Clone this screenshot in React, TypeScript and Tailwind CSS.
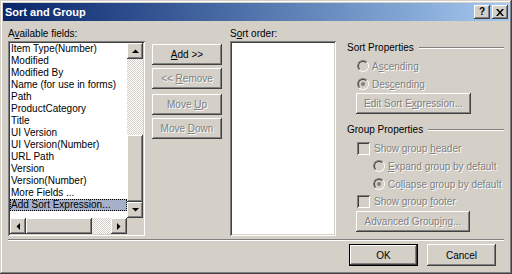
import React from 'react';

const raised =
  'shadow-[inset_-1px_-1px_#404040,inset_1px_1px_#fff,inset_-2px_-2px_#808080,inset_2px_2px_#d4d0c8]';
const sunken =
  'shadow-[inset_1px_1px_#808080,inset_-1px_-1px_#fff,inset_2px_2px_#404040,inset_-2px_-2px_#d4d0c8]';
const dimText = 'text-[#808080] [text-shadow:1px_1px_0_#fff]';
const checker =
  'bg-[image:repeating-conic-gradient(#fff_0_25%,#d4d0c8_0_50%)] bg-[length:2px_2px]';

const fields = [
  'Item Type(Number)',
  'Modified',
  'Modified By',
  'Name (for use in forms)',
  'Path',
  'ProductCategory',
  'Title',
  'UI Version',
  'UI Version(Number)',
  'URL Path',
  'Version',
  'Version(Number)',
  'More Fields ...',
  'Add Sort Expression...',
];

// label with one underlined access key
const Key: React.FC<{ text: string; at: number }> = ({ text, at }) => (
  <>
    {text.slice(0, at)}
    <span className="underline underline-offset-[1px]">{text[at]}</span>
    {text.slice(at + 1)}
  </>
);

const Button: React.FC<{
  children: React.ReactNode;
  disabled?: boolean;
  isDefault?: boolean;
  className?: string;
}> = ({ children, disabled, isDefault, className = '' }) => (
  <div
    className={`flex items-center justify-center bg-[#d4d0c8] ${raised} ${
      isDefault ? 'border border-black' : ''
    } ${disabled ? dimText : 'text-black'} ${className}`}
  >
    <span>{children}</span>
  </div>
);

const Arrow: React.FC<{ dir: 'up' | 'down' | 'left' | 'right' }> = ({ dir }) => {
  const pts = {
    up: '0,4 7,4 3.5,0.5',
    down: '0,0 7,0 3.5,3.5',
    left: '4,0 4,7 0.5,3.5',
    right: '0,0 0,7 3.5,3.5',
  }[dir];
  const vertical = dir === 'up' || dir === 'down';
  return (
    <svg width={vertical ? 7 : 4} height={vertical ? 4 : 7} viewBox={vertical ? '0 0 7 4' : '0 0 4 7'}>
      <polygon points={pts} fill="#000" />
    </svg>
  );
};

const ScrollBtn: React.FC<{ dir: 'up' | 'down' | 'left' | 'right' }> = ({ dir }) => (
  <div className={`w-[16px] h-[16px] shrink-0 flex items-center justify-center bg-[#d4d0c8] ${raised}`}>
    <Arrow dir={dir} />
  </div>
);

const Radio: React.FC<{ checked?: boolean }> = ({ checked }) => (
  <div className="w-[12px] h-[12px] shrink-0 rounded-full border border-t-[#808080] border-l-[#808080] border-r-white border-b-white">
    <div className="w-full h-full rounded-full border border-t-[#404040] border-l-[#404040] border-r-[#d4d0c8] border-b-[#d4d0c8] bg-[#d4d0c8] flex items-center justify-center">
      {checked && <div className="w-[4px] h-[4px] rounded-full bg-[#808080]" />}
    </div>
  </div>
);

const Check: React.FC = () => <div className={`w-[13px] h-[13px] shrink-0 bg-[#d4d0c8] ${sunken}`} />;

const GroupHeader: React.FC<{ title: string }> = ({ title }) => (
  <div className="h-[13px] flex items-center">
    <span className="leading-[13px]">{title}</span>
    <div className="ml-[5px] flex-1 h-0 border-t border-t-[#808080] border-b border-b-white" />
  </div>
);

export default function App() {
  return (
    <div
      className={`w-[512px] h-[274px] bg-[#d4d0c8] p-[3px] flex flex-col font-['Liberation_Sans',Arial,sans-serif] text-[10px] text-black shadow-[inset_-1px_-1px_#404040,inset_1px_1px_#d4d0c8,inset_-2px_-2px_#808080,inset_2px_2px_#fff]`}
    >
      {/* title bar */}
      <div className="h-[18px] shrink-0 flex items-center bg-linear-to-r from-[#0a246a] to-[#a6caf0] pl-[2px] pr-[1px]">
        <span className="text-white font-bold text-[11px] leading-none">Sort and Group</span>
        <div className="ml-auto flex gap-[2px]">
          <div className={`w-[16px] h-[14px] flex items-center justify-center bg-[#d4d0c8] ${raised}`}>
            <span className="font-bold text-[10px] leading-none">?</span>
          </div>
          <div className={`w-[16px] h-[14px] flex items-center justify-center bg-[#d4d0c8] ${raised}`}>
            <svg width="8" height="7" viewBox="0 0 8 7">
              <path d="M0 0h2l2 2.5L6 0h2L5 3.5 8 7H6L4 4.5 2 7H0l3-3.5z" fill="#000" />
            </svg>
          </div>
        </div>
      </div>

      {/* body */}
      <div className="flex-1 flex flex-col px-[5px]">
        <div className="mt-[6px] flex">
          {/* available fields */}
          <div className="w-[137px] flex flex-col">
            <div className="h-[14px] leading-[13px]">
              <Key text="Available fields:" at={1} />
            </div>
            <div className={`h-[195px] bg-white p-[2px] flex flex-col ${sunken}`}>
              <div className="flex flex-1 min-h-0">
                <div className="flex-1 flex flex-col overflow-hidden">
                  {fields.map((f, i) => (
                    <div
                      key={f}
                      className={`h-[12px] shrink-0 leading-[12px] pl-[1px] whitespace-nowrap ${
                        i === fields.length - 1
                          ? 'bg-[#a5b0ca] outline outline-1 outline-dotted outline-black -outline-offset-1'
                          : ''
                      }`}
                    >
                      {f}
                    </div>
                  ))}
                </div>
                <div className="w-[16px] flex flex-col">
                  <ScrollBtn dir="up" />
                  <div className={`flex-1 ${checker}`} />
                  <div className={`h-[67px] bg-[#d4d0c8] ${raised}`} />
                  <ScrollBtn dir="down" />
                </div>
              </div>
              <div className="h-[16px] flex">
                <ScrollBtn dir="left" />
                <div className={`w-[66px] bg-[#d4d0c8] ${raised}`} />
                <div className={`flex-1 ${checker}`} />
                <ScrollBtn dir="right" />
                <div className="w-[16px] bg-[#d4d0c8]" />
              </div>
            </div>
          </div>

          {/* move buttons */}
          <div className="ml-[7px] w-[70px] pt-[17px] flex flex-col">
            <Button className="h-[21px]">
              <Key text="Add >>" at={0} />
            </Button>
            <Button disabled className="h-[21px] mt-[3px]">
              <Key text="<< Remove" at={3} />
            </Button>
            <Button disabled className="h-[21px] mt-[5px]">
              <Key text="Move Up" at={5} />
            </Button>
            <Button disabled className="h-[21px] mt-[3px]">
              <Key text="Move Down" at={5} />
            </Button>
          </div>

          {/* sort order */}
          <div className="ml-[8px] w-[106px] flex flex-col">
            <div className="h-[14px] leading-[13px]">
              <Key text="Sort order:" at={1} />
            </div>
            <div className={`h-[195px] bg-white ${sunken}`} />
          </div>

          {/* properties */}
          <div className="ml-[11px] flex-1 pt-[14px] flex flex-col">
            <GroupHeader title="Sort Properties" />
            <div className={`mt-[3px] h-[18px] ml-[10px] flex items-center gap-[3px] ${dimText}`}>
              <Radio />
              <span>
                <Key text="Ascending" at={1} />
              </span>
            </div>
            <div className={`h-[18px] ml-[10px] flex items-center gap-[3px] ${dimText}`}>
              <Radio checked />
              <span>
                <Key text="Descending" at={3} />
              </span>
            </div>
            <Button disabled className="ml-[9px] w-[115px] h-[21px]">
              <Key text="Edit Sort Expression..." at={11} />
            </Button>

            <div className="mt-[9px]">
              <GroupHeader title="Group Properties" />
            </div>
            <div className={`mt-[3px] h-[18px] ml-[10px] flex items-center gap-[4px] ${dimText}`}>
              <Check />
              <span>
                <Key text="Show group header" at={11} />
              </span>
            </div>
            <div className={`h-[18px] ml-[26px] flex items-center gap-[3px] ${dimText}`}>
              <Radio />
              <span>
                <Key text="Expand group by default" at={0} />
              </span>
            </div>
            <div className={`h-[18px] ml-[26px] flex items-center gap-[3px] ${dimText}`}>
              <Radio checked />
              <span>
                <Key text="Collapse group by default" at={2} />
              </span>
            </div>
            <div className={`h-[17px] ml-[10px] flex items-center gap-[4px] ${dimText}`}>
              <Check />
              <span>
                <Key text="Show group footer" at={11} />
              </span>
            </div>
            <Button disabled className="mt-[1px] ml-[9px] w-[114px] h-[21px]">
              <Key text="Advanced Grouping..." at={14} />
            </Button>
          </div>
        </div>

        {/* separator */}
        <div className="mt-[3px] h-0 border-t border-t-[#808080] border-b border-b-white" />

        {/* footer */}
        <div className="mt-[3px] flex justify-end gap-[9px] pr-[8px]">
          <Button isDefault className="w-[69px] h-[22px]">
            OK
          </Button>
          <Button className="w-[69px] h-[22px]">Cancel</Button>
        </div>
      </div>
    </div>
  );
}
